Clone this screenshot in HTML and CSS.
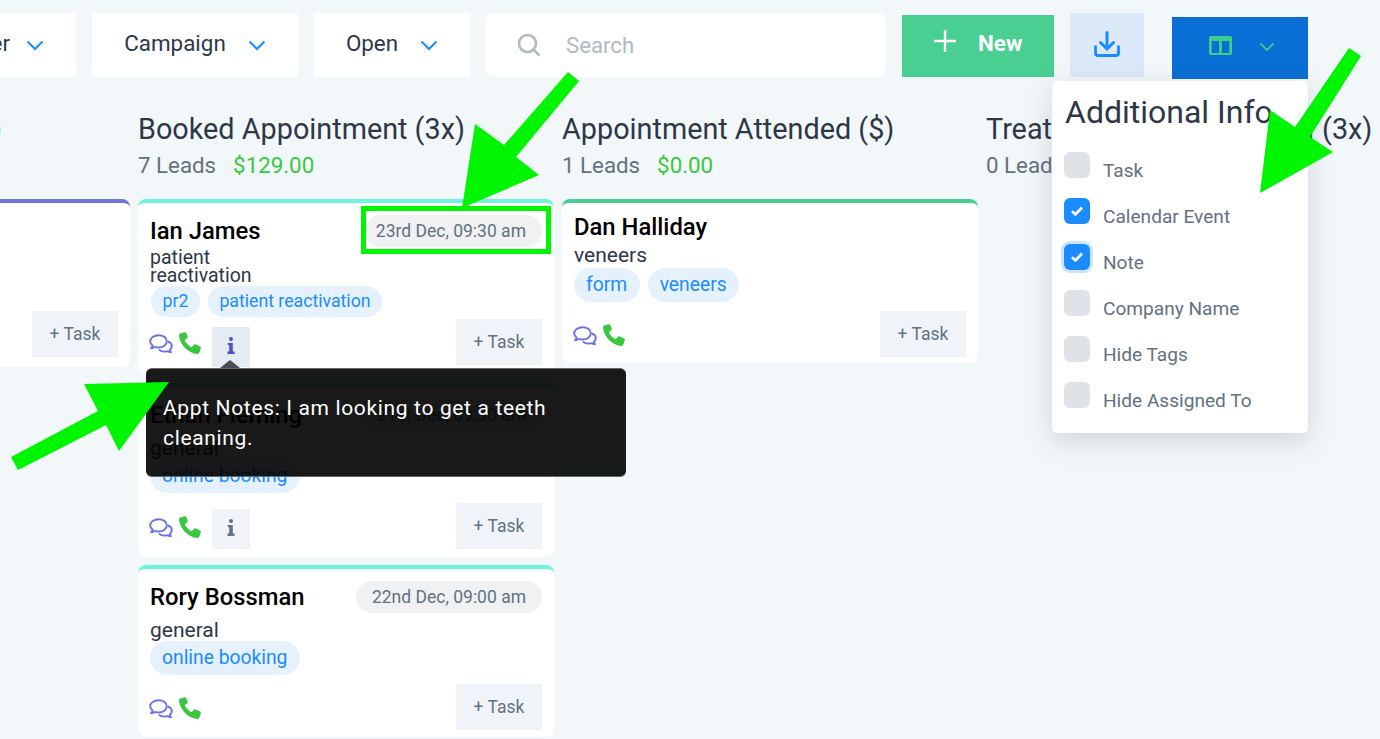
FILE: index.html
```html
<!DOCTYPE html>
<html lang="en">
  <head>
    <meta charset="utf-8">
    <title>Opportunities</title>
    <link rel="stylesheet" href="styles.css">
  </head>

  <body>
    <svg class="icon-defs" width="0" height="0">
      <symbol id="chat" viewBox="0 0 24 20">
        <path d="M9.500 1.200C4.900 1.200 1.200 3.900 1.200 7.200c0 1.700 1 3.200 2.500 4.300-.2 1-.8 1.900-1.700 2.700 1.500 0 3-.5 4.100-1.300 1.100.4 2.300.6 3.400.6 4.600 0 8.300-2.700 8.300-6.300S14.100 1.200 9.500 1.200z" fill="none" stroke="currentColor" stroke-width="1.900" stroke-linejoin="round"/>
        <path d="M18.800 7.500c2.400.9 4 2.700 4 4.700 0 1.500-.8 2.800-2.100 3.800.1.800.6 1.600 1.300 2.200-1.300 0-2.600-.4-3.500-1.100-1 .3-2 .5-3 .5-2.300 0-4.400-.8-5.700-2" fill="none" stroke="currentColor" stroke-width="1.900" stroke-linejoin="round"/>
      </symbol>
      <symbol id="phone" viewBox="0 0 24 24">
        <path d="M6.600 1.200 2.300 2.600C1.300 3 .8 3.900 1 5c1.500 9.300 8.800 16.700 18 18 1.100.2 2-.4 2.400-1.400l1.400-4.300c.2-.7-.1-1.400-.7-1.700l-4.700-2.300c-.6-.3-1.300-.1-1.700.4l-2 2.500c-3.100-1.500-5.500-4-7-7l2.500-2c.5-.4.700-1.100.4-1.700L8.300 1.900c-.3-.6-1-.9-1.700-.7z" fill="currentColor"/>
      </symbol>
      <symbol id="chevron" viewBox="0 0 18 12">
        <path d="M1.500 2.500 9 10l7.500-7.500" fill="none" stroke="currentColor" stroke-width="2"/>
      </symbol>
      <symbol id="check" viewBox="0 0 14 12">
        <path d="M2 6.200 5.400 9.400 12 2.600" fill="none" stroke="#fff" stroke-width="2.800"/>
      </symbol>
      <symbol id="info" viewBox="0 0 8 17">
        <circle cx="4" cy="2" r="2" fill="currentColor"/>
        <path d="M.8 6h5v8.600h1.700V17H.5v-2.400h1.700V8.200H.8z" fill="currentColor"/>
      </symbol>
    </svg>

    <div class="page">
      <div class="toolbar">
        <div class="filter filter-owner">
          <span>Assigned Owner</span>
          <svg class="chevron"><use href="#chevron"/></svg>
        </div>
        <div class="filter filter-campaign">
          <span>Campaign</span>
          <svg class="chevron"><use href="#chevron"/></svg>
        </div>
        <div class="filter filter-status">
          <span>Open</span>
          <svg class="chevron"><use href="#chevron"/></svg>
        </div>
        <div class="search">
          <svg class="search-icon" viewBox="0 0 24 24">
            <circle cx="10.500" cy="10.500" r="8.500" fill="none" stroke="currentColor" stroke-width="2.600"/>
            <path d="M16.800 16.800 22.500 22.500" stroke="currentColor" stroke-width="2.600"/>
          </svg>
          <span>Search</span>
        </div>
        <div class="new-btn">
          <svg class="plus" viewBox="0 0 22 22">
            <path d="M11 0v22M0 11h22" stroke="#fff" stroke-width="2.400"/>
          </svg>
          <span>New</span>
        </div>
        <div class="download-btn">
          <svg class="download" viewBox="0 0 26 26">
            <path d="M13 1.500v16M6.500 11.500l6.500 6.500 6.500-6.500" fill="none" stroke="currentColor" stroke-width="3" stroke-linecap="round"/>
            <path d="M1.500 14.500v7.500q0 2.500 2.500 2.500h18q2.500 0 2.500-2.500v-7.500" fill="none" stroke="currentColor" stroke-width="2.800"/>
          </svg>
        </div>
        <div class="view-btn">
          <svg class="columns" viewBox="0 0 23 19">
            <path d="M2 0h19q2 0 2 2v15q0 2-2 2H2q-2 0-2-2V2q0-2 2-2zM2.700 5v12h7.400V5zM12.900 5v12h7.400V5z" fill="currentColor" fill-rule="evenodd"/>
          </svg>
          <svg class="chevron chevron-view"><use href="#chevron"/></svg>
        </div>
      </div>

      <div class="board">
        <div class="column">
          <h2 class="heading-cut">Booked Lead (0)</h2>
          <div class="column-sub"><span>4 Leads</span><span class="amount">$0.00</span></div>
          <div class="card card-purple">
            <div class="card-foot card-foot-flush">
              <button class="task-btn">+ Task</button>
            </div>
          </div>
        </div>

        <div class="column">
          <h2>Booked Appointment (3x)</h2>
          <div class="column-sub"><span>7 Leads</span><span class="amount">$129.00</span></div>

          <div class="card card-first">
            <div class="card-head">
              <div class="name">Ian James</div>
              <div class="date">23rd Dec, 09:30 am</div>
            </div>
            <div class="source source-wrap">patient<br>reactivation</div>
            <div class="tags tags-small">
              <span class="tag">pr2</span>
              <span class="tag">patient reactivation</span>
            </div>
            <div class="card-foot">
              <svg class="chat"><use href="#chat"/></svg>
              <svg class="phone"><use href="#phone"/></svg>
              <span class="info info-active"><svg><use href="#info"/></svg></span>
              <button class="task-btn">+ Task</button>
            </div>
          </div>

          <div class="card card-second">
            <div class="card-head">
              <div class="name">Ethan Fleming</div>
              <div class="date">21st Dec, 09:30 am</div>
            </div>
            <div class="source">general</div>
            <div class="tags">
              <span class="tag">online booking</span>
            </div>
            <div class="card-foot">
              <svg class="chat"><use href="#chat"/></svg>
              <svg class="phone"><use href="#phone"/></svg>
              <span class="info"><svg><use href="#info"/></svg></span>
              <button class="task-btn">+ Task</button>
            </div>
          </div>

          <div class="card">
            <div class="card-head">
              <div class="name">Rory Bossman</div>
              <div class="date">22nd Dec, 09:00 am</div>
            </div>
            <div class="source">general</div>
            <div class="tags">
              <span class="tag">online booking</span>
            </div>
            <div class="card-foot">
              <svg class="chat"><use href="#chat"/></svg>
              <svg class="phone"><use href="#phone"/></svg>
              <button class="task-btn">+ Task</button>
            </div>
          </div>
        </div>

        <div class="column">
          <h2>Appointment Attended ($)</h2>
          <div class="column-sub"><span>1 Leads</span><span class="amount">$0.00</span></div>
          <div class="card card-green">
            <div class="name">Dan Halliday</div>
            <div class="source source-tight">veneers</div>
            <div class="tags tags-tight">
              <span class="tag">form</span>
              <span class="tag">veneers</span>
            </div>
            <div class="card-foot">
              <svg class="chat"><use href="#chat"/></svg>
              <svg class="phone"><use href="#phone"/></svg>
              <button class="task-btn">+ Task</button>
            </div>
          </div>
        </div>

        <div class="column">
          <h2 class="heading-wide">Treatment Plan Proposed (3x)</h2>
          <div class="column-sub"><span>0 Leads</span><span class="amount">$0.00</span></div>
        </div>
      </div>
    </div>

    <div class="tooltip">
      <span class="tooltip-arrow"></span>
      Appt Notes: I am looking to get a teeth cleaning.
    </div>

    <div class="popover">
      <h3>Additional Info</h3>
      <label class="option"><span class="box"></span>Task</label>
      <label class="option"><span class="box box-on"><svg><use href="#check"/></svg></span>Calendar Event</label>
      <label class="option"><span class="box box-on box-focus"><svg><use href="#check"/></svg></span>Note</label>
      <label class="option"><span class="box"></span>Company Name</label>
      <label class="option"><span class="box"></span>Hide Tags</label>
      <label class="option"><span class="box"></span>Hide Assigned To</label>
    </div>

    <!-- annotations added on top of the screenshot -->
    <svg class="marks" viewBox="0 0 1380 739">
      <rect x="363.500" y="208.500" width="185" height="43" fill="none" stroke="#00f500" stroke-width="5"/>
      <polygon fill="#00f500" points="568,72 579,81 516,157 539,175 462,208 475,124 504,145"/>
      <polygon fill="#00f500" points="11,457 18,470 106,425 119,451 169,382 84,384 98,411"/>
      <polygon fill="#00f500" points="1349,48 1361,56 1310,137 1333,152 1260,193 1270,110 1295,127"/>
    </svg>
  </body>
</html>
```

FILE: styles.css
```css
* {
  box-sizing: border-box;
}

html, body {
  margin: 0;
  height: 100%;
  overflow: hidden;
}

body {
  position: relative;
  background-color: #f2f7fa;
  font-family: Roboto, "Liberation Sans", sans-serif;
  color: #2d3748;
}

.icon-defs {
  position: absolute;
}

.page {
  width: 1800px;
  margin-left: -100px;
  padding-top: 13px;
}

/* toolbar */
.toolbar {
  display: flex;
  align-items: flex-start;
  height: 66px;
}

.filter {
  display: flex;
  align-items: center;
  justify-content: center;
  gap: 22px;
  height: 64px;
  margin-right: 16px;
  background-color: #fff;
  font-size: 22.400px;
  padding-bottom: 5px;
}

.filter-owner {
  width: 176px;
  justify-content: flex-end;
  gap: 16px;
  padding-right: 32px;
  white-space: nowrap;
}

.filter-campaign {
  width: 206px;
}

.filter-status {
  width: 156px;
}

.chevron {
  flex-shrink: 0;
  width: 18px;
  height: 12px;
  color: #1a8cff;
  margin-top: 5px;
}

.search {
  display: flex;
  align-items: center;
  width: 400px;
  height: 64px;
  margin-right: 16px;
  padding-left: 31px;
  background-color: #fff;
  border-radius: 8px;
  color: #b0bac3;
  font-size: 22.200px;
}

.search-icon {
  width: 24px;
  height: 24px;
  margin-right: 25px;
}

.new-btn {
  display: flex;
  align-items: center;
  width: 152px;
  height: 62px;
  margin-top: 2px;
  margin-right: 16px;
  padding: 0 0 6px 32px;
  background-color: #48cf91;
  color: #fff;
  font-size: 22.400px;
  font-weight: 700;
}

.plus {
  width: 22px;
  height: 22px;
  margin-right: 22px;
  margin-top: -4px;
}

.download-btn {
  display: flex;
  align-items: center;
  justify-content: center;
  width: 74px;
  height: 64px;
  margin-right: 28px;
  background-color: #dbe9f9;
  color: #1a8cff;
  padding-bottom: 2px;
}

.download {
  width: 26px;
  height: 26px;
}

.view-btn {
  display: flex;
  align-items: center;
  width: 136px;
  height: 62px;
  margin-top: 4px;
  padding: 0 0 6px 37px;
  background-color: #0a6fd4;
  color: #3ecf8e;
}

.columns {
  width: 23px;
  height: 19px;
  margin-right: 27px;
}

.chevron-view {
  color: #3ecf8e;
  width: 16px;
  height: 11px;
  margin-top: 3px;
}

/* board */
.board {
  display: flex;
  gap: 8px;
  margin-left: -186px;
  padding-top: 33px;
}

.column {
  flex: 0 0 416px;
  width: 416px;
}

.column h2 {
  margin: 0;
  font-size: 28.800px;
  font-weight: 400;
  line-height: 34px;
  white-space: nowrap;
}

.column .heading-cut {
  padding-right: 128px;
  text-align: right;
}

.column .heading-wide {
  word-spacing: 1px;
}

.column-sub {
  display: flex;
  gap: 17px;
  height: 48px;
  margin-top: 5px;
  font-size: 22.300px;
  line-height: 28px;
  color: #62727f;
}

.amount {
  color: #37c83f;
}

.card {
  position: relative;
  height: 172px;
  margin-bottom: 8px;
  padding: 12px 12px 0;
  background-color: #fff;
  border-top: 4px solid #6ff5dc;
  border-radius: 8px;
}

.card-first {
  height: 176px;
}

.card-second {
  height: 174px;
}

.card-purple {
  border-top-color: #7173e0;
  height: 168px;
  padding-top: 108px;
}

.card-green {
  height: 164px;
  border-top-color: #48cf91;
  padding-top: 8px;
}

.card-head {
  display: flex;
  align-items: center;
  justify-content: space-between;
  min-height: 32px;
}

.name {
  font-size: 23.800px;
  font-weight: 500;
  line-height: 32px;
  color: #000;
}

.date {
  height: 32px;
  padding: 0 16px;
  border-radius: 16px;
  background-color: #eff1f2;
  color: #62727f;
  font-size: 17.500px;
  line-height: 32px;
}

.card-first .date {
  padding: 0 16px 0 11px;
}

.source {
  margin-top: 5px;
  font-size: 21px;
  line-height: 25px;
  height: 25px;
}

.source-wrap {
  margin-top: 2px;
  height: 35px;
  font-size: 19.500px;
  line-height: 18px;
}

.source-tight {
  margin-top: 0;
}

.tags {
  display: flex;
  gap: 8px;
  margin-top: -2px;
}

.tag {
  height: 34px;
  padding: 0 12.500px 0 12px;
  border-radius: 17px;
  background-color: #e6f1fe;
  color: #1a8cff;
  font-size: 19.300px;
  line-height: 34px;
}

.tags-small {
  margin-left: 1px;
  margin-top: 2px;
}

.tags-small .tag {
  height: 31px;
  padding: 0 11.500px;
  font-size: 17.700px;
  line-height: 31px;
}

.tags-tight {
  margin-top: 0;
}

.card-foot {
  display: flex;
  align-items: center;
  height: 46px;
  margin-top: 9px;
}

.card-first .card-foot {
  margin-top: 2px;
}

.card-second .card-foot {
  margin-top: 10px;
}

.card-foot-flush {
  margin-top: 0;
}

.chat {
  width: 24px;
  height: 20px;
  margin-left: -1px;
  margin-top: 3px;
  color: #6b74e6;
}

.phone {
  width: 24px;
  height: 24px;
  margin-left: 5px;
  margin-top: 2px;
  color: #37c83f;
}

.info {
  display: flex;
  align-items: center;
  justify-content: center;
  width: 38px;
  height: 40px;
  margin-left: 10px;
  margin-top: 6px;
  padding-bottom: 4px;
  background-color: #f0f4f8;
  color: #62727f;
}

.info svg {
  width: 8px;
  height: 17px;
}

.info-active {
  margin-top: 10px;
  background-color: #e4ebf3;
  color: #4c4fd0;
}

.task-btn {
  width: 86px;
  height: 46px;
  margin-left: auto;
  border: none;
  background-color: #f0f4f8;
  color: #62727f;
  font-family: inherit;
  font-size: 17.500px;
  padding: 0;
}

/* tooltip */
.tooltip {
  position: absolute;
  left: 146px;
  top: 368px;
  width: 480px;
  height: 109px;
  padding: 24px 16px 0 17px;
  border-top: 1px solid #666;
  border-bottom: 1px solid #666;
  border-radius: 6px;
  background-color: rgba(0, 0, 0, 0.9);
  color: #fff;
  font-size: 21px;
  line-height: 30px;
  letter-spacing: 0.65px;
}

.tooltip-arrow {
  position: absolute;
  left: 74px;
  top: -9px;
  border-left: 10px solid transparent;
  border-right: 10px solid transparent;
  border-bottom: 8px solid #4a4f54;
}

/* additional info dropdown */
.popover {
  position: absolute;
  left: 1052px;
  top: 81px;
  width: 256px;
  height: 352px;
  padding: 12px 12px 0;
  background-color: #fff;
  border-radius: 6px;
  box-shadow: 0 8px 28px rgba(60, 80, 95, 0.2);
}

.popover h3 {
  margin: 0 0 21px 1px;
  font-size: 32px;
  font-weight: 400;
  line-height: 38px;
  white-space: nowrap;
}

.option {
  display: flex;
  align-items: flex-start;
  height: 46px;
  color: #62727f;
  font-size: 19.100px;
  line-height: 38px;
}

.box {
  flex: 0 0 26px;
  width: 26px;
  height: 26px;
  margin-right: 13px;
  border-radius: 6px;
  background-color: #dfe3e8;
}

.box-on {
  display: flex;
  align-items: center;
  justify-content: center;
  background-color: #1a8cff;
}

.box-on svg {
  width: 14px;
  height: 12px;
}

.box-focus {
  box-shadow: 0 0 0 3px #cce5ff;
}

.marks {
  position: absolute;
  left: 0;
  top: 0;
  width: 1380px;
  height: 739px;
}
```
